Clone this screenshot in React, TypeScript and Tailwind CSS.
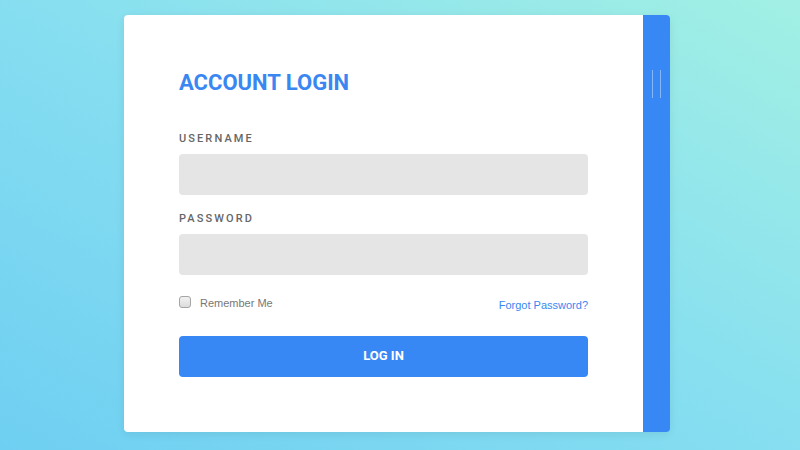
import { FC, JSX } from 'react';

const Field: FC<{ label: string; type: string; className?: string }> = ({
  label,
  type,
  className,
}): JSX.Element => (
  <div className={className}>
    <label className="block text-[11px] font-medium leading-[16px] tracking-[2.1px] text-[#666]">
      {label}
    </label>
    <input
      type={type}
      className="mt-[7px] block h-[41px] w-full rounded-[4px] bg-[#e5e5e5] px-3 outline-none"
    />
  </div>
);

export default function App(): JSX.Element {
  return (
    <div
      className="flex h-[450px] w-[800px] items-start bg-[linear-gradient(30deg,#6fcff2_0%,#86def0_50%,#a2f0e4_100%)] pl-[124px] pt-[15px]"
      style={{ fontFamily: 'Roboto, "Liberation Sans", sans-serif' }}
    >
      <div className="flex h-[417px] w-[546px] overflow-hidden rounded-[4px] shadow-[0_2px_10px_rgba(0,0,0,0.08)]">
        {/* Форма */}
        <div className="w-[519px] bg-white px-[55px] pt-[55px]">
          <h1 className="text-[22px] font-bold leading-[26px] text-[#3a87f2]">
            ACCOUNT LOGIN
          </h1>

          <Field label="USERNAME" type="text" className="mt-[35px]" />
          <Field label="PASSWORD" type="password" className="mt-[16px]" />

          <div
            className="mt-[18px] flex items-start justify-between text-[11px]"
            style={{ fontFamily: '"Liberation Sans", Arial, sans-serif' }}
          >
            <label className="flex items-center gap-[9px] text-[#777]">
              <span className="block h-[12px] w-[12px] rounded-[3px] border border-[#a5a5a5] bg-[linear-gradient(#f2f2f2,#dcdcdc)]" />
              <span className="mt-[2px]">Remember Me</span>
            </label>
            <a href="#" className="mt-[4px] text-[#3a87f2]">
              Forgot Password?
            </a>
          </div>

          <button className="mt-[22px] flex h-[41px] w-full items-center justify-center rounded-[4px] bg-[#3787f5] text-[13px] font-bold text-white">
            LOG IN
          </button>
        </div>

        {/* Синяя полоса */}
        <div className="flex w-[27px] justify-center gap-[7px] bg-[#3787f5] pt-[55px]">
          <div className="h-[28px] w-px bg-[#86b7fa]" />
          <div className="h-[28px] w-px bg-[#86b7fa]" />
        </div>
      </div>
    </div>
  );
}
